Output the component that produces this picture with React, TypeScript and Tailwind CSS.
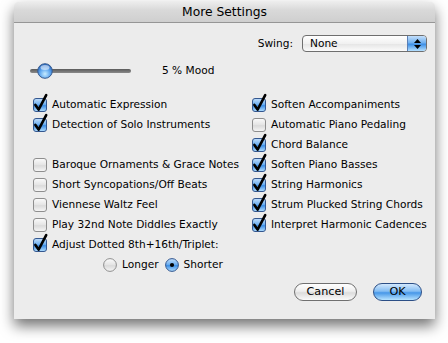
import React from 'react';

const CheckBox: React.FC<{ checked: boolean }> = ({ checked }) => (
    <svg width="14" height="14" viewBox="0 0 14 14" className="shrink-0 overflow-visible">
        <defs>
            <linearGradient id="cbOn" x1="0" y1="0" x2="0" y2="1">
                <stop offset="0" stopColor="#c4dffb" />
                <stop offset="0.45" stopColor="#6fb0f0" />
                <stop offset="0.55" stopColor="#3d8fe6" />
                <stop offset="1" stopColor="#b5e0ff" />
            </linearGradient>
            <linearGradient id="cbOff" x1="0" y1="0" x2="0" y2="1">
                <stop offset="0" stopColor="#fbfbfb" />
                <stop offset="0.5" stopColor="#e4e4e4" />
                <stop offset="0.55" stopColor="#dadada" />
                <stop offset="1" stopColor="#f7f7f7" />
            </linearGradient>
        </defs>
        <rect x="0.5" y="0.5" width="13" height="13" rx="2.5"
            fill={checked ? 'url(#cbOn)' : 'url(#cbOff)'}
            stroke={checked ? '#34578f' : '#8e8e8e'} />
        {checked && (
            <path d="M2.4 6.9 L5.6 11.6 L13.2 -2.8" fill="none" stroke="#000" strokeWidth="2.6"
                strokeLinecap="round" strokeLinejoin="round" />
        )}
    </svg>
);

const Radio: React.FC<{ checked: boolean }> = ({ checked }) => (
    <svg width="14" height="14" viewBox="0 0 14 14" className="shrink-0">
        <defs>
            <linearGradient id="rdOn" x1="0" y1="0" x2="0" y2="1">
                <stop offset="0" stopColor="#c4dffb" />
                <stop offset="0.45" stopColor="#6fb0f0" />
                <stop offset="0.55" stopColor="#3d8fe6" />
                <stop offset="1" stopColor="#b5e0ff" />
            </linearGradient>
            <linearGradient id="rdOff" x1="0" y1="0" x2="0" y2="1">
                <stop offset="0" stopColor="#fbfbfb" />
                <stop offset="0.5" stopColor="#e4e4e4" />
                <stop offset="0.55" stopColor="#dadada" />
                <stop offset="1" stopColor="#f7f7f7" />
            </linearGradient>
        </defs>
        <circle cx="7" cy="7" r="6.4" fill={checked ? 'url(#rdOn)' : 'url(#rdOff)'}
            stroke={checked ? '#34578f' : '#8e8e8e'} />
        {checked && <circle cx="7" cy="7" r="2.1" fill="#000" />}
    </svg>
);

const Item: React.FC<{ label: string; checked?: boolean }> = ({ label, checked = false }) => (
    <div className="h-[20px] flex items-center gap-[5px] whitespace-nowrap">
        <CheckBox checked={checked} />
        <span>{label}</span>
    </div>
);

const App: React.FC = () => {
    return (
        <div className="w-[448px] h-[343px] bg-white pt-[2px] pl-[14px] font-['DejaVu_Sans',sans-serif] text-[10.6px] text-black">
            <div className="w-[421px] h-[317px] flex flex-col rounded-t-[5px] bg-[#ececec] shadow-[0_7px_14px_rgba(0,0,0,0.55)] overflow-hidden">
                {/* title bar */}
                <div className="h-[21px] shrink-0 flex items-center justify-center border-b border-[#969696] bg-[linear-gradient(to_bottom,#ececec,#d9d9d9_40%,#cfcfcf)] text-[12.3px]">
                    More Settings
                </div>

                {/* swing popup */}
                <div className="mt-[12px] h-[17px] flex items-center justify-end pr-[8px] gap-[9px]">
                    <span>Swing:</span>
                    <div className="w-[125px] h-[17px] flex rounded-[4px] border border-[#6f6f6f] overflow-hidden bg-[linear-gradient(to_bottom,#fff,#f1f1f1_50%,#e6e6e6_55%,#fbfbfb)]">
                        <span className="flex-1 pl-[7px] leading-[15px]">None</span>
                        <div className="w-[19px] flex flex-col items-center justify-center gap-[2px] border-l border-[#5b7fb5] bg-[linear-gradient(to_bottom,#c4dffb,#6fb0f0_45%,#3d8fe6_55%,#b5e0ff)]">
                            <svg width="7" height="4" viewBox="0 0 7 4"><path d="M3.5 0 L7 4 L0 4 Z" fill="#000" /></svg>
                            <svg width="7" height="4" viewBox="0 0 7 4"><path d="M0 0 L7 0 L3.5 4 Z" fill="#000" /></svg>
                        </div>
                    </div>
                </div>

                {/* slider */}
                <div className="mt-[11px] h-[16px] flex items-center pl-[16px]">
                    <div className="relative w-[101px] h-[16px] flex items-center">
                        <div className="w-full h-[4px] rounded-full bg-[linear-gradient(to_bottom,#5a5a5a,#8a8a8a)]" />
                        <svg width="16" height="16" viewBox="0 0 16 16" className="absolute left-[7px] top-0">
                            <defs>
                                <radialGradient id="knob" cx="0.5" cy="0.7" r="0.6">
                                    <stop offset="0" stopColor="#c7ecff" />
                                    <stop offset="0.6" stopColor="#5ea6ef" />
                                    <stop offset="1" stopColor="#2f6fc4" />
                                </radialGradient>
                            </defs>
                            <circle cx="8" cy="8" r="7.3" fill="url(#knob)" stroke="#3a5c8e" />
                            <ellipse cx="8" cy="4.5" rx="4.5" ry="2.5" fill="#ffffff" opacity="0.55" />
                        </svg>
                    </div>
                    <span className="ml-[31px]">5 % Mood</span>
                </div>

                {/* options */}
                <div className="mt-[16px] flex pl-[19px]">
                    <div className="w-[219px] flex flex-col">
                        <Item label="Automatic Expression" checked />
                        <Item label="Detection of Solo Instruments" checked />
                        <div className="h-[20px]" />
                        <Item label="Baroque Ornaments & Grace Notes" />
                        <Item label="Short Syncopations/Off Beats" />
                        <Item label="Viennese Waltz Feel" />
                        <Item label="Play 32nd Note Diddles Exactly" />
                        <Item label="Adjust Dotted 8th+16th/Triplet:" checked />
                        <div className="h-[20px] flex items-center pl-[70px] whitespace-nowrap">
                            <Radio checked={false} />
                            <span className="ml-[5px]">Longer</span>
                            <span className="ml-[6px]"><Radio checked /></span>
                            <span className="ml-[5px]">Shorter</span>
                        </div>
                    </div>
                    <div className="flex flex-col">
                        <Item label="Soften Accompaniments" checked />
                        <Item label="Automatic Piano Pedaling" />
                        <Item label="Chord Balance" checked />
                        <Item label="Soften Piano Basses" checked />
                        <Item label="String Harmonics" checked />
                        <Item label="Strum Plucked String Chords" checked />
                        <Item label="Interpret Harmonic Cadences" checked />
                    </div>
                </div>

                {/* buttons */}
                <div className="mt-[8px] flex justify-end pr-[13px] gap-[16px] text-[11.2px]">
                    <button className="w-[63px] h-[18px] rounded-full border border-[#707070] bg-[linear-gradient(to_bottom,#ffffff,#eeeeee_45%,#dcdcdc_55%,#fafafa)] leading-[16px]">
                        Cancel
                    </button>
                    <button className="w-[49px] h-[18px] rounded-full border border-[#2c4f86] bg-[linear-gradient(to_bottom,#d2e8fd,#84bdf3_45%,#4797e8_55%,#b8e4ff)] leading-[16px]">
                        OK
                    </button>
                </div>
            </div>
        </div>
    );
};

export default App;
